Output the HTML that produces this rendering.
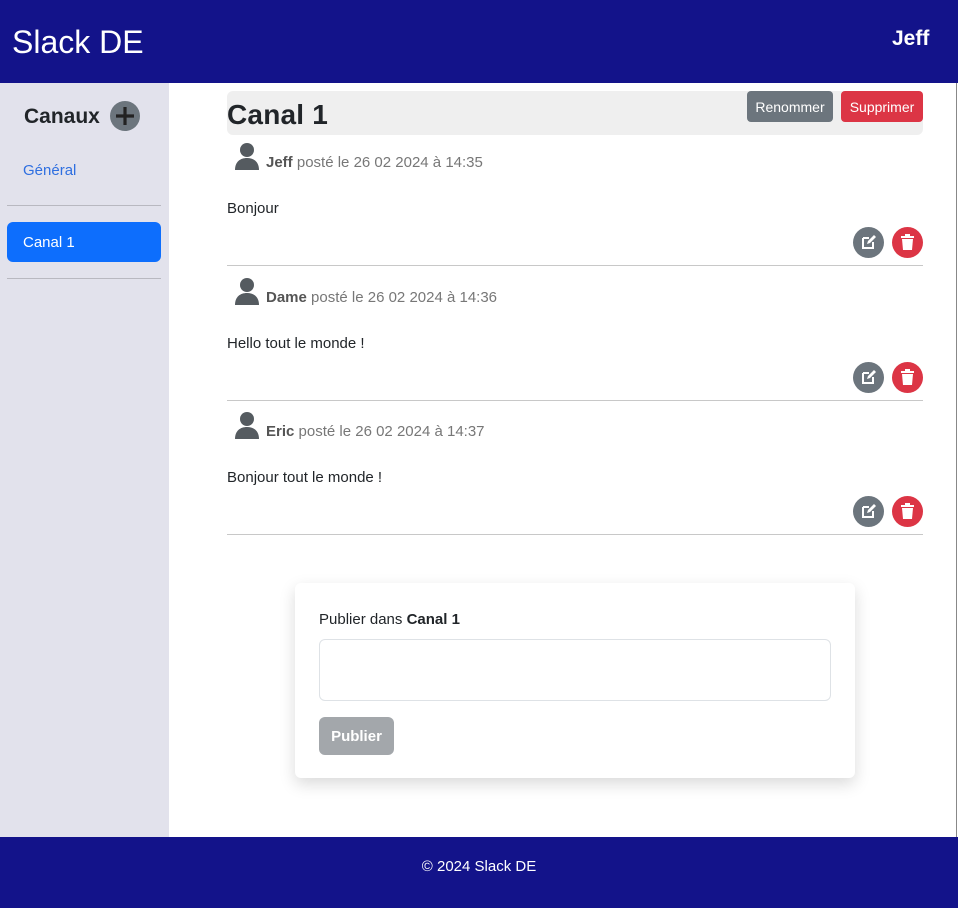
<!DOCTYPE html>
<html><head><meta charset="utf-8"><style>
*{box-sizing:border-box;margin:0;padding:0}
body{width:958px;height:908px;position:relative;overflow:hidden;font-family:"Liberation Sans",sans-serif;background:#fff;color:#212529}
.abs{position:absolute}
.hdr{left:0;top:0;width:958px;height:83px;background:#13138a}
.side{left:0;top:83px;width:169px;height:754px;background:#e2e2ec}
.ftr{left:0;top:837px;width:958px;height:71px;background:#13138a;color:#fff;font-size:15px;text-align:center;line-height:58px;padding-top:1px}
.msg-name{font-size:15px;color:#555}
.msg-name b{color:#555}
.msg-name span{color:#777;font-weight:300}
.circ{border-radius:50%;width:31px;height:31px}
.hr{height:1px;background:#c8c8c8;width:696px;left:227px}
</style></head><body>
<div class="abs hdr"></div>
<div class="abs" style="left:12px;top:24px;color:#fff;font-size:32px;">Slack DE</div>
<div class="abs" style="left:892px;top:27px;color:#fff;font-size:21px;font-weight:bold;">Jeff</div>
<div class="abs side"></div>
<div class="abs" style="left:24px;top:105px;font-size:21px;font-weight:bold;">Canaux</div>
<div class="abs circ" style="left:110px;top:101px;width:30px;height:30px;background:#6c757d;"><svg width="30" height="30" viewBox="0 0 30 30"><path d="M15 6v18M6 15h18" stroke="#222" stroke-width="3.2"/></svg></div>
<div class="abs" style="left:23px;top:162px;font-size:15px;color:#2f6fe0;">Général</div>
<div class="abs" style="left:7px;top:205px;width:154px;height:1px;background:#b8b8c0"></div>
<div class="abs" style="left:7px;top:222px;width:154px;height:40px;background:#0d6efd;border-radius:6px;color:#fff;font-size:15px;padding:12px 0 0 16px;">Canal 1</div>
<div class="abs" style="left:7px;top:278px;width:154px;height:1px;background:#b8b8c0"></div>
<div class="abs" style="left:956px;top:83px;width:1px;height:754px;background:#888"></div>

<div class="abs" style="left:227px;top:91px;width:696px;height:44px;background:#efefef;border-radius:6px"></div>
<div class="abs" style="left:227px;top:99px;font-size:28px;font-weight:bold;letter-spacing:0.2px">Canal 1</div>
<div class="abs" style="left:747px;top:91px;width:86px;height:31px;background:#6c757d;border-radius:4px;color:#fff;font-size:14px;text-align:center;line-height:32px">Renommer</div>
<div class="abs" style="left:841px;top:91px;width:82px;height:31px;background:#dc3545;border-radius:4px;color:#fff;font-size:14px;text-align:center;line-height:32px">Supprimer</div>

<!-- message 1 -->
<svg class="abs" style="left:234px;top:142px" width="26" height="29" viewBox="0 0 26 29"><circle cx="13" cy="8" r="7" fill="#555b60"/><path d="M1 28c0-8 5-12 12-12s12 4 12 12z" fill="#555b60"/></svg>
<div class="abs msg-name" style="left:266px;top:154px"><b>Jeff</b> <span>posté le 26 02 2024 à 14:35</span></div>
<div class="abs" style="left:227px;top:200px;font-size:15px">Bonjour</div>
<div class="abs circ" style="left:853px;top:227px;background:#6c757d"><svg width="31" height="31" viewBox="0 0 31 31"><path d="M10 11h6M10 11v10h10v-6" stroke="#fff" stroke-width="2" fill="none"/><path d="M14 17l1-3 6-6 2 2-6 6z" fill="#fff"/></svg></div>
<div class="abs circ" style="left:892px;top:227px;background:#dc3545"><svg width="31" height="31" viewBox="0 0 31 31"><path d="M9 9h13v2H9zM13 7h5v2h-5zM10 12h11l-1 11h-9z" fill="#fff"/></svg></div>
<div class="abs hr" style="top:265px"></div>
<!-- message 2 -->
<svg class="abs" style="left:234px;top:277px" width="26" height="29" viewBox="0 0 26 29"><circle cx="13" cy="8" r="7" fill="#555b60"/><path d="M1 28c0-8 5-12 12-12s12 4 12 12z" fill="#555b60"/></svg>
<div class="abs msg-name" style="left:266px;top:289px"><b>Dame</b> <span>posté le 26 02 2024 à 14:36</span></div>
<div class="abs" style="left:227px;top:335px;font-size:15px">Hello tout le monde !</div>
<div class="abs circ" style="left:853px;top:362px;background:#6c757d"><svg width="31" height="31" viewBox="0 0 31 31"><path d="M10 11h6M10 11v10h10v-6" stroke="#fff" stroke-width="2" fill="none"/><path d="M14 17l1-3 6-6 2 2-6 6z" fill="#fff"/></svg></div>
<div class="abs circ" style="left:892px;top:362px;background:#dc3545"><svg width="31" height="31" viewBox="0 0 31 31"><path d="M9 9h13v2H9zM13 7h5v2h-5zM10 12h11l-1 11h-9z" fill="#fff"/></svg></div>
<div class="abs hr" style="top:400px"></div>
<!-- message 3 -->
<svg class="abs" style="left:234px;top:411px" width="26" height="29" viewBox="0 0 26 29"><circle cx="13" cy="8" r="7" fill="#555b60"/><path d="M1 28c0-8 5-12 12-12s12 4 12 12z" fill="#555b60"/></svg>
<div class="abs msg-name" style="left:266px;top:423px"><b>Eric</b> <span>posté le 26 02 2024 à 14:37</span></div>
<div class="abs" style="left:227px;top:469px;font-size:15px">Bonjour tout le monde !</div>
<div class="abs circ" style="left:853px;top:496px;background:#6c757d"><svg width="31" height="31" viewBox="0 0 31 31"><path d="M10 11h6M10 11v10h10v-6" stroke="#fff" stroke-width="2" fill="none"/><path d="M14 17l1-3 6-6 2 2-6 6z" fill="#fff"/></svg></div>
<div class="abs circ" style="left:892px;top:496px;background:#dc3545"><svg width="31" height="31" viewBox="0 0 31 31"><path d="M9 9h13v2H9zM13 7h5v2h-5zM10 12h11l-1 11h-9z" fill="#fff"/></svg></div>
<div class="abs hr" style="top:534px"></div>

<!-- form -->
<div class="abs" style="left:295px;top:583px;width:560px;height:195px;background:#fff;border-radius:6px;box-shadow:0 6px 16px rgba(0,0,0,.15)"></div>
<div class="abs" style="left:319px;top:611px;font-size:15px">Publier dans <b>Canal 1</b></div>
<div class="abs" style="left:319px;top:639px;width:512px;height:62px;border:1px solid #dee2e6;border-radius:6px"></div>
<div class="abs" style="left:319px;top:717px;width:75px;height:38px;background:#a3a7ab;border-radius:6px;color:#fff;font-size:15px;font-weight:bold;text-align:center;line-height:40px">Publier</div>

<div class="abs ftr">© 2024 Slack DE</div>
</body></html>
